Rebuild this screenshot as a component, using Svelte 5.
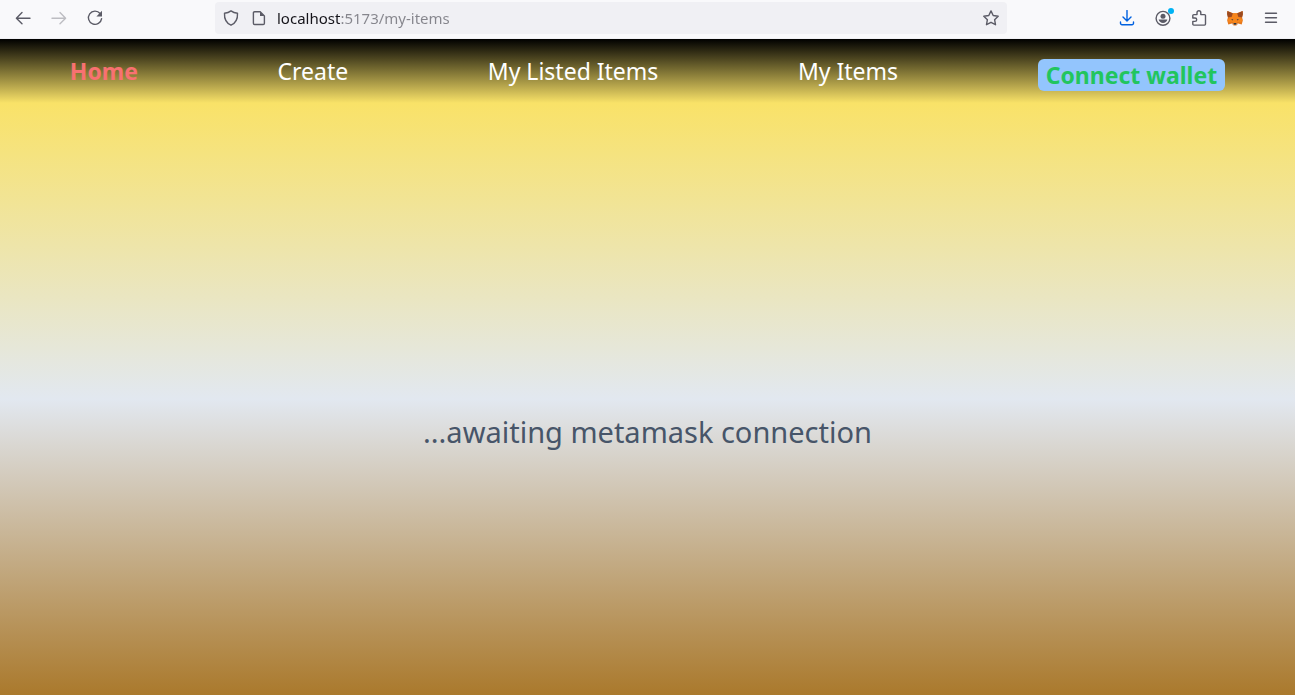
<script>
  let address = $state('localhost:5173/my-items');
  const links = [
    { label: 'Home', href: '#home', active: true },
    { label: 'Create', href: '#create', active: false },
    { label: 'My Listed Items', href: '#my-listed-items', active: false },
    { label: 'My Items', href: '#my-items', active: false }
  ];
</script>

<div class="window">
  <header class="toolbar">
    <div class="group history">
      <button class="tool" aria-label="Back">
        <svg viewBox="0 0 16 16"><path d="M15 8.2H1.8M7 2.6 1.4 8.2 7 13.8" /></svg>
      </button>
      <button class="tool faded" aria-label="Forward">
        <svg viewBox="0 0 16 16"><path d="M1 8.2h13.2M9 2.6l5.6 5.6L9 13.8" /></svg>
      </button>
      <button class="tool" aria-label="Reload">
        <svg viewBox="0 0 16 16">
          <path d="M13.1 3.5A6.6 6.6 0 1 0 14.6 8.6" />
          <path class="solid" d="M15 .8v5.6H9.4z" />
        </svg>
      </button>
    </div>

    <div class="address">
      <button class="tool" aria-label="Tracking protection">
        <svg viewBox="0 0 16 16"><path d="M8 .9C10 2.5 12.4 3.1 14.5 3.2 14.8 8.5 12.8 13 8 15.2 3.2 13 1.2 8.5 1.5 3.2 3.6 3.1 6 2.5 8 .9z" /></svg>
      </button>
      <button class="tool" aria-label="Site information">
        <svg viewBox="0 0 16 16">
          <path d="M3.6 1.7h5.6l4.2 4.2v7.4a1.2 1.2 0 0 1-1.2 1.2H3.6a1.2 1.2 0 0 1-1.2-1.2V2.9a1.2 1.2 0 0 1 1.2-1.2z" />
          <path class="solid" d="M9 1.7v4.4h4.4z" />
        </svg>
      </button>
      <input type="text" aria-label="Address" bind:value={address} />
      <button class="tool" aria-label="Bookmark this page">
        <svg viewBox="0 0 16 16"><path d="M8 .9l2.2 4.6 5 .7-3.6 3.5.9 5L8 12.3l-4.5 2.4.9-5L.8 6.200l5-.7z" /></svg>
      </button>
    </div>

    <div class="group extras">
      <button class="tool download" aria-label="Downloads">
        <svg viewBox="0 0 16 16"><path d="M8 .5v10.3M4 7l4 4 4-4M1.5 12v1.2a1.5 1.5 0 0 0 1.5 1.5h10a1.5 1.5 0 0 0 1.5-1.5V12" /></svg>
      </button>
      <button class="tool account" aria-label="Account">
        <svg viewBox="0 0 16 16">
          <circle cx="8" cy="8.3" r="6.9" />
          <circle class="solid" cx="8" cy="6.2" r="2.5" />
          <path class="solid" d="M3.6 9.6h8.8c-.6 2.1-2.3 3.4-4.4 3.4s-3.8-1.3-4.400-3.4z" />
        </svg>
        <span class="dot"></span>
      </button>
      <button class="tool" aria-label="Extensions">
        <svg viewBox="0 0 16 16"><path d="M1.800 8V5.600a1 1 0 0 1 1-1h3.200V2.700a1.900 1.900 0 0 1 3.800 0v1.900h3.700a1 1 0 0 1 1 1v8.500a1 1 0 0 1-1 1H2.800a1 1 0 0 1-1-1v-2.700h2.200a1.700 1.700 0 0 0 0-3.400z" /></svg>
      </button>
      <button class="tool fox" aria-label="MetaMask">
        <svg viewBox="0 0 16 16">
          <path fill="#e4761b" d="M.4.9 6 3.3h4L15.6.9 15.9 4l-.8 3.3.7 3.1-1.1 4-3.500-.9-1.900 1.900H6.700l-1.900-1.900-3.500.9-1.100-4 .7-3.100L.1 4z" />
          <path fill="#9b4a20" d="M.4.9 6 3.6 4.9 6.7.9 7.3.1 4zM15.600.9 10 3.600l1.100 3.100 4 .6.800-3.300z" />
          <path fill="#f6851b" d="M6 3.300h4l1.100 3.500 4.300 2.800-1 3-4-.6L8.800 14H7.200l-1.600-2-4 .6-1-3 4.300-2.800z" />
          <path fill="#233447" d="M3.900 8.900l2.300.7-.3 1zM12.100 8.900l-2.300.7.3 1zM6.700 12.900h2.600l.2 1.700h-3z" />
          <path fill="#d7c1b3" d="M4.800 13.200l1.700.6v1.700zM11.200 13.200l-1.700.6v1.700z" />
        </svg>
      </button>
      <button class="tool" aria-label="Menu">
        <svg viewBox="0 0 16 16"><path d="M2.500 3.300h11M2.500 7.800h11M2.500 12.300h11" /></svg>
      </button>
    </div>
  </header>

  <nav>
    {#each links as link}
      <a href={link.href} class:active={link.active}>{link.label}</a>
    {/each}
    <button class="connect">Connect wallet</button>
  </nav>

  <main>
    <p>...awaiting metamask connection</p>
  </main>
</div>

<style>
  :global(body) {
    margin: 0;
  }

  .window {
    display: flex;
    flex-direction: column;
    min-height: 100vh;
    font-family: 'Noto Sans', 'Open Sans', sans-serif;
  }

  button {
    margin: 0;
    padding: 0;
    border: 0;
    background: none;
    font: inherit;
    cursor: pointer;
  }

  .toolbar {
    display: flex;
    justify-content: space-between;
    box-sizing: border-box;
    height: 39px;
    padding: 2px 16px 4px 15px;
    border-bottom: 1px solid #f0f0f4;
    background: #f9f9fb;
  }

  .group {
    display: flex;
    align-items: center;
    gap: 20px;
  }

  .tool {
    position: relative;
    display: flex;
    flex: none;
    color: #5b5b66;
  }

  .faded {
    color: #bdbdc2;
  }

  .download {
    color: #0061e0;
  }

  svg {
    width: 16px;
    height: 16px;
    fill: none;
    stroke: currentColor;
    stroke-width: 1.4;
    stroke-linecap: round;
    stroke-linejoin: round;
  }

  svg .solid {
    fill: currentColor;
    stroke: none;
  }

  .fox svg {
    stroke: none;
  }

  .dot {
    position: absolute;
    top: -2px;
    right: -3px;
    width: 6px;
    height: 6px;
    border-radius: 50%;
    background: #00b3f4;
  }

  .address {
    display: flex;
    flex: 0 1 792px;
    align-items: center;
    gap: 12px;
    height: 32px;
    padding: 0 8px;
    border-radius: 4px;
    background: #f0f0f4;
    box-sizing: border-box;
  }

  .address input {
    flex: 1;
    min-width: 0;
    height: 32px;
    margin-left: -2px;
    padding: 0;
    border: 0;
    outline: 0;
    font-family: inherit;
    font-size: 15px;
    color: transparent;
    caret-color: #15141a;
    background: linear-gradient(to right, #15141a 63px, #85858c 63px);
    background-clip: text;
  }

  nav {
    display: flex;
    justify-content: space-around;
    align-items: flex-start;
    box-sizing: border-box;
    min-height: 64px;
    padding-top: 16px;
    background: linear-gradient(to bottom, #000000, #f9e268);
    font-size: 23px;
    line-height: 32px;
  }

  nav a {
    color: #ffffff;
    text-decoration: none;
  }

  nav a.active {
    color: #f87171;
    font-weight: 700;
  }

  .connect {
    margin-top: 4px;
    padding: 0 8px;
    border-radius: 6px;
    background: #93c5fd;
    color: #22c55e;
    font-weight: 700;
  }

  main {
    display: grid;
    flex: 1;
    place-items: center;
    padding-top: 66px;
    background: linear-gradient(to bottom, #f9e268, #e2e8f0, #aa792c);
  }

  p {
    margin: 0;
    color: #475569;
    font-size: 29px;
    line-height: 36px;
  }
</style>
